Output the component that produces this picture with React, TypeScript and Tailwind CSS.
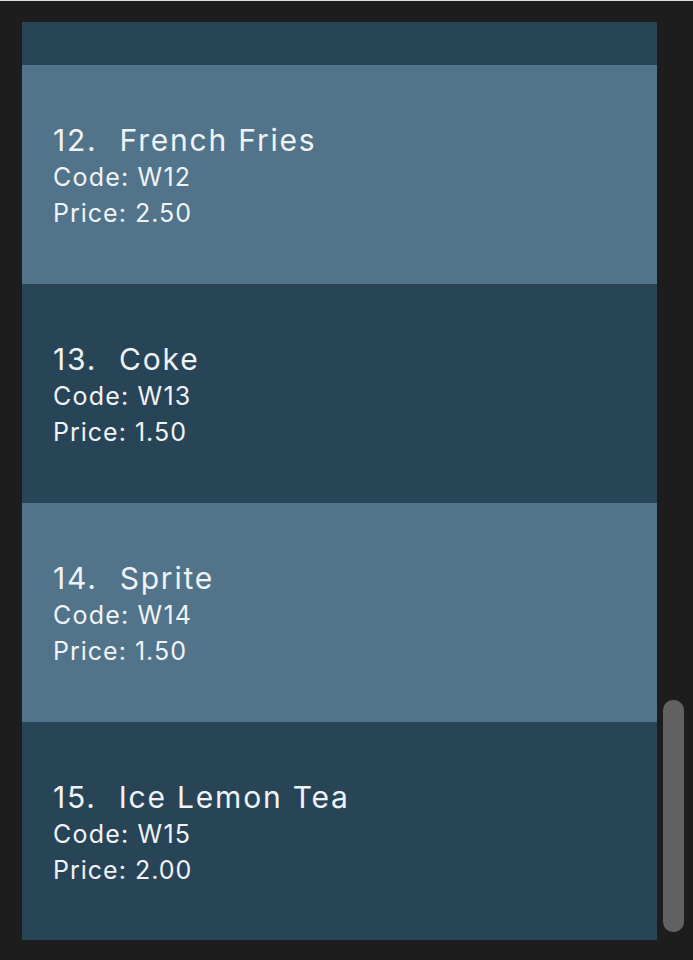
import React from "react";

const items = [
  { n: "12.", name: "French Fries", code: "W12", price: "2.50", light: true },
  { n: "13.", name: "Coke", code: "W13", price: "1.50", light: false },
  { n: "14.", name: "Sprite", code: "W14", price: "1.50", light: true },
  { n: "15.", name: "Ice Lemon Tea", code: "W15", price: "2.00", light: false },
];

export default function App() {
  return (
    <div
      className="w-[693px] h-[960px] bg-[#1d1d1d] border-t border-[#dcdcdc] flex overflow-hidden"
      style={{ fontFamily: "Inter, 'Noto Sans', sans-serif" }}
    >
      <div className="ml-[22px] mt-[21px] w-[635px] h-[918px] flex flex-col overflow-hidden">
        <div className="h-[43px] shrink-0 bg-[#284457]" />
        {items.map((it) => (
          <div
            key={it.n}
            className={`h-[219px] shrink-0 flex flex-col pl-[31px] pt-[56px] text-[#f0f3f6] ${
              it.light ? "bg-[#51748a]" : "bg-[#284457]"
            }`}
          >
            <div className="flex gap-[22px] text-[30px] leading-[38px] tracking-[1.8px]">
              <span>{it.n}</span>
              <span>{it.name}</span>
            </div>
            <div className="text-[25px] leading-[36px] tracking-[1.2px]">Code: {it.code}</div>
            <div className="text-[25px] leading-[36px] tracking-[1px]">Price: {it.price}</div>
          </div>
        ))}
      </div>
      <div className="ml-[6px] pt-[699px]">
        <div className="w-[21px] h-[232px] rounded-[10px] bg-[#616161]" />
      </div>
    </div>
  );
}
